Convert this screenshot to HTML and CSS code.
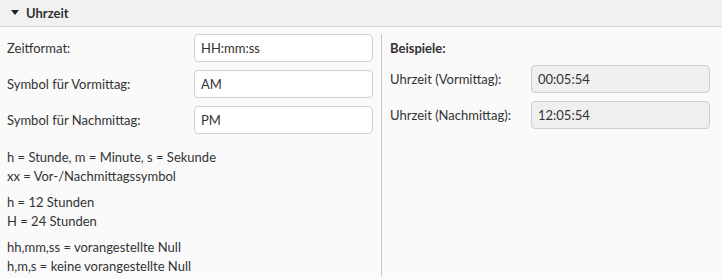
FILE: index.html
```html
<!DOCTYPE html>
<html lang="de">
<head>
  <meta charset="UTF-8">
  <title>Uhrzeit</title>
  <link rel="stylesheet" href="styles.css">
</head>
<body>
  <div class="abschnitt">
    <div class="kopf">
      <span class="pfeil"></span>
      <h2>Uhrzeit</h2>
    </div>
    <div class="inhalt">
      <div class="links">
        <div class="zeile">
          <label for="format">Zeitformat:</label>
          <input type="text" id="format" value="HH:mm:ss">
        </div>
        <div class="zeile">
          <label for="vormittag">Symbol für Vormittag:</label>
          <input type="text" id="vormittag" value="AM">
        </div>
        <div class="zeile">
          <label for="nachmittag">Symbol für Nachmittag:</label>
          <input type="text" id="nachmittag" value="PM">
        </div>
        <div class="hilfe">
          <p>h = Stunde, m = Minute, s = Sekunde<br>xx = Vor-/Nachmittagssymbol</p>
          <p>h = 12 Stunden<br>H = 24 Stunden</p>
          <p>hh,mm,ss = vorangestellte Null<br>h,m,s = keine vorangestellte Null</p>
        </div>
      </div>
      <div class="rechts">
        <h3>Beispiele:</h3>
        <div class="zeile">
          <label>Uhrzeit (Vormittag):</label>
          <input type="text" value="00:05:54" readonly>
        </div>
        <div class="zeile">
          <label>Uhrzeit (Nachmittag):</label>
          <input type="text" value="12:05:54" readonly>
        </div>
      </div>
    </div>
  </div>
</body>
</html>
```

FILE: styles.css
```css
:root {
  --text-color: #333;
  --border-color: #cfcfcf;
  --head-color: #f1f1f1;
  --page-color: #fafafa;
  --readonly-color: #efefef;
}

* {
  box-sizing: border-box;
  margin: 0;
  padding: 0;
}

body {
  margin: 0;
  background-color: var(--page-color);
  font-family: Lato, 'Open Sans', sans-serif;
  font-size: 13px;
  color: var(--text-color);
}

.kopf {
  display: flex;
  align-items: center;
  gap: 7px;
  height: 27px;
  padding: 0 0 1px 11px;
  background-color: var(--head-color);
  border-bottom: 1px solid #d4d4d4;
  h2 {
    font-size: 13px;
    font-weight: bold;
  }
}

.pfeil {
  width: 0;
  height: 0;
  border-left: 4.5px solid transparent;
  border-right: 4.5px solid transparent;
  border-top: 5px solid #222;
}

.inhalt {
  display: flex;
  padding: 7px 0 6px;
}

.zeile {
  display: flex;
  align-items: center;
  height: 28px;
  margin-bottom: 8px;
  label {
    flex: 0 0 auto;
  }
  input {
    height: 28px;
    padding: 0 6px;
    border: 1px solid var(--border-color);
    border-radius: 4px;
    background-color: #fff;
    font-family: inherit;
    font-size: 13px;
    color: var(--text-color);
    outline: none;
  }
}

.links {
  width: 381px;
  padding: 0 8px 0 7px;
  .zeile label {
    width: 187px;
  }
  .zeile input {
    width: 179px;
  }
}

.hilfe {
  padding-top: 6px;
  p {
    line-height: 19px;
    margin-bottom: 7px;
  }
  p:last-child {
    margin-bottom: 0;
  }
}

.rechts {
  border-left: 1px solid #c8c8c8;
  padding-left: 8px;
  h3 {
    font-size: 13px;
    font-weight: bold;
    height: 28px;
    line-height: 28px;
    margin-bottom: 3px;
  }
  .zeile label {
    width: 141px;
  }
  .zeile input {
    width: 179px;
    background-color: var(--readonly-color);
  }
}
```
